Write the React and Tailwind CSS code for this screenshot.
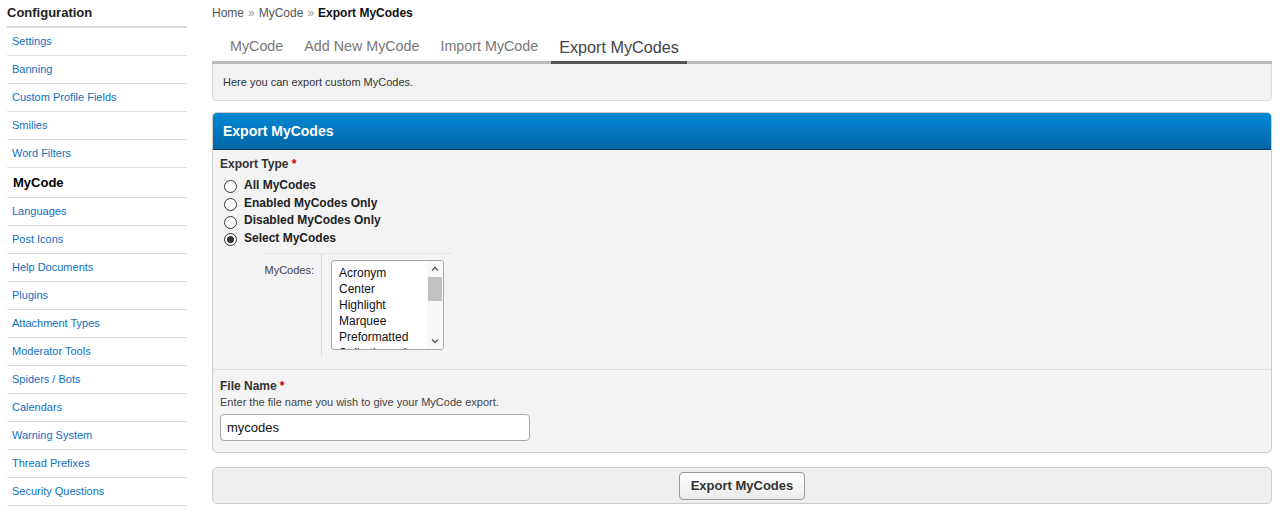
import React from "react";

const sideItems = [
  "Settings",
  "Banning",
  "Custom Profile Fields",
  "Smilies",
  "Word Filters",
  "MyCode",
  "Languages",
  "Post Icons",
  "Help Documents",
  "Plugins",
  "Attachment Types",
  "Moderator Tools",
  "Spiders / Bots",
  "Calendars",
  "Warning System",
  "Thread Prefixes",
  "Security Questions",
];

const tabs = ["MyCode", "Add New MyCode", "Import MyCode", "Export MyCodes"];

const options = ["All MyCodes", "Enabled MyCodes Only", "Disabled MyCodes Only", "Select MyCodes"];

const codes = ["Acronym", "Center", "Highlight", "Marquee", "Preformatted", "Strikethrough"];

function Radio({ checked }) {
  return (
    <span className="w-[13px] h-[13px] rounded-full border border-[#333] bg-white flex items-center justify-center shrink-0">
      {checked && <span className="w-[7px] h-[7px] rounded-full bg-[#333]" />}
    </span>
  );
}

export default function App() {
  return (
    <div className="flex bg-white min-h-[519px] font-['Liberation_Sans',Arial,sans-serif] text-[#333]">
      {/* Sidebar */}
      <div className="w-[180px] ml-[7px] shrink-0">
        <div className="h-[28px] pb-[1px] flex items-center text-[13px] font-bold text-[#222] border-b-2 border-[#ddd]">
          Configuration
        </div>
        <ul>
          {sideItems.map((item) => (
            <li
              key={item}
              className={`flex items-center border-b border-[#ddd] ${
                item === "MyCode"
                  ? "h-[30px] pl-[6px] text-[13px] font-bold text-black"
                  : "h-[28px] pl-[5px] text-[11px] text-[#0f6fbf]"
              }`}
            >
              {item}
            </li>
          ))}
        </ul>
      </div>

      {/* Main */}
      <div className="ml-[25px] w-[1060px]">
        <div className="h-[25px] flex items-center text-[12px] text-[#555]">
          Home <span className="mx-[4px] text-[#999]">»</span> MyCode
          <span className="mx-[4px] text-[#999]">»</span>
          <span className="font-bold text-[#111]">Export MyCodes</span>
        </div>

        {/* Tabs */}
        <div className="flex pl-[10px] border-b-[3px] border-[#bbb] h-[39px] items-end">
          {tabs.map((t) => (
            <div
              key={t}
              className={`px-[8px] mr-[5px] h-[36px] pt-[5px] flex items-center -mb-[3px] border-b-[3px] ${
                t === "Export MyCodes"
                  ? "text-[16.2px] text-[#444] border-[#555]"
                  : "text-[14.3px] text-[#777] border-transparent"
              }`}
            >
              {t}
            </div>
          ))}
        </div>

        <div className="h-[37px] bg-[#f2f2f2] border border-t-0 border-[#ddd] rounded-b-[4px] flex items-center pl-[10px] pt-[1px] text-[11px] text-[#333]">
          Here you can export custom MyCodes.
        </div>

        {/* Panel */}
        <div className="mt-[11px] border border-[#ccc] rounded-[5px] bg-[#f3f3f3] overflow-hidden">
          <div className="h-[37px] bg-gradient-to-b from-[#0388d6] to-[#0267a6] border-b border-[#0b3d60] flex items-center pl-[10px] text-white font-bold text-[14px]">
            Export MyCodes
          </div>

          <div className="px-[7px] pt-[5px] h-[220px] border-b border-[#ddd]">
            <div className="text-[12px] font-bold text-[#333]">
              Export Type <span className="text-[#c00]">*</span>
            </div>
            <div className="mt-[5px] pl-[4px]">
              {options.map((o, i) => (
                <div key={o} className="flex items-center gap-[7px] h-[17.7px]">
                  <Radio checked={i === 3} />
                  <span className="text-[12px] font-bold text-[#222] -mt-[4px]">{o}</span>
                </div>
              ))}
            </div>

            <div className="ml-[42px] mt-[4px] w-[190px] border-t border-[#e4e4e4] flex">
              <div className="w-[60px] pt-[8px] text-right pr-[7px] text-[11px] text-[#444] border-r border-[#d8d8d8] h-[102px]">
                MyCodes:
              </div>
              <div className="pl-[9px] pt-[6px]">
                <div className="w-[113px] h-[90px] border border-[#a8a8a8] rounded-[3px] bg-white flex overflow-hidden">
                  <div className="flex-1 pl-[7px] pt-[4px] overflow-hidden">
                    {codes.map((c) => (
                      <div key={c} className="h-[16px] leading-[16px] text-[12px] text-[#111]">
                        {c}
                      </div>
                    ))}
                  </div>
                  <div className="w-[16px] flex flex-col items-center bg-[#f8f8f8]">
                    <svg width="16" height="16" viewBox="0 0 16 16" className="shrink-0">
                      <path d="M5 9.5 L8 6.5 L11 9.5" fill="none" stroke="#555" strokeWidth="1.3" />
                    </svg>
                    <div className="w-[14px] h-[24px] bg-[#c1c1c1]" />
                    <div className="flex-1" />
                    <svg width="16" height="16" viewBox="0 0 16 16" className="shrink-0">
                      <path d="M5 6.5 L8 9.5 L11 6.5" fill="none" stroke="#555" strokeWidth="1.3" />
                    </svg>
                  </div>
                </div>
              </div>
            </div>
          </div>

          <div className="px-[7px] pt-[8px] h-[82px]">
            <div className="h-[16px] flex items-center text-[12px] font-bold text-[#333]">
              File Name <span className="text-[#c00] ml-[3px]">*</span>
            </div>
            <div className="h-[16px] flex items-center text-[11px] text-[#444]">
              Enter the file name you wish to give your MyCode export.
            </div>
            <div className="mt-[4px] w-[310px] h-[27px] border border-[#aaa] rounded-[4px] bg-white flex items-center pl-[6px] text-[13px] text-[#111]">
              mycodes
            </div>
          </div>
        </div>

        {/* Submit */}
        <div className="mt-[14px] h-[37px] bg-[#efefef] border border-[#ccc] rounded-[5px] flex items-center justify-center">
          <button className="w-[126px] h-[28px] border border-[#999] rounded-[4px] bg-gradient-to-b from-white to-[#ebebeb] text-[13px] font-bold text-[#333]">
            Export MyCodes
          </button>
        </div>
      </div>
    </div>
  );
}
